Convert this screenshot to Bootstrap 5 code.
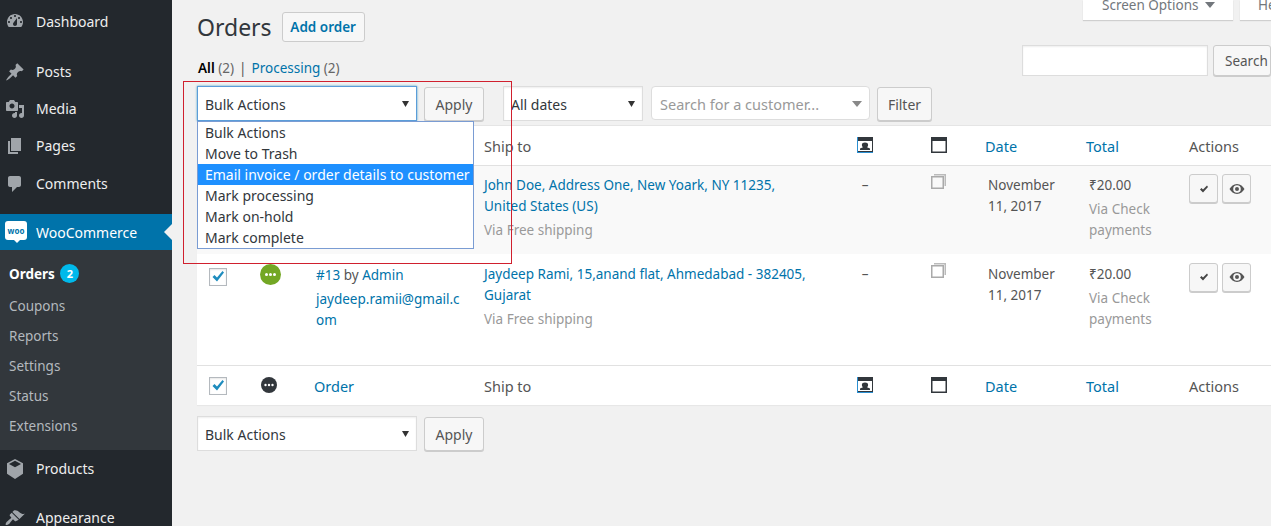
<!DOCTYPE html>
<html lang="en">
<head>
<meta charset="UTF-8">
<title>Orders</title>
<link href="https://cdn.jsdelivr.net/npm/bootstrap@5.3.3/dist/css/bootstrap.min.css" rel="stylesheet">
<style>
html, body { height: 526px; overflow: hidden; }
body { background: #f1f1f1; color: #32373c; font-family: "Noto Sans", "Open Sans", sans-serif; font-size: 14px; line-height: 21px; }
a { color: #0073aa; text-decoration: none; }

/* sidebar */
.side-menu { width: 172px; height: 526px; flex: none; background: #23282d; overflow: hidden; }
.side-link { display: flex; align-items: center; height: 37px; color: #eee; position: relative; }
.side-link svg { width: 20px; height: 20px; margin: 0 11px 0 5px; fill: #a0a5aa; flex: none; }
.side-first { height: 36px; margin-top: 3px; margin-bottom: 14px; }
.side-gap { margin-top: 1px; margin-bottom: 12px; }
.side-active { background: #0073aa; color: #fff; height: 36px; }
.side-active::after { content: ""; position: absolute; right: 0; top: 10px; border: 8px solid transparent; border-right-color: #f1f1f1; border-left-width: 0; }
.woo-logo { width: 22px; height: 19px; margin: 0 9px 3px 5px; background: #fff; border-radius: 3px; color: #0073aa; font-size: 8px; font-weight: 700; line-height: 19px; text-align: center; position: relative; flex: none; }
.woo-logo::after { content: ""; position: absolute; left: 9px; top: 19px; border: 3px solid transparent; border-top-color: #fff; }
.side-sub { background: #32373c; height: 200px; padding-top: 8px; }
.side-sub a { display: block; height: 30px; line-height: 30px; padding-left: 9px; color: #b4b9be; font-size: 13.5px; }
.side-sub a.side-current { color: #fff; font-weight: 700; margin-top: 1px; margin-bottom: 2px; }
.order-count { display: inline-block; width: 19px; height: 19px; margin-left: 2px; border-radius: 50%; background: #00b9eb; color: #fff; font-size: 11px; line-height: 19px; text-align: center; vertical-align: 1px; }
.side-after { margin-bottom: 12px; }

/* page */
.page-wrap { flex: 1; min-width: 0; padding-left: 25px; position: relative; overflow: hidden; }
.head-row { height: 42px; }
.page-title { font-size: 23px; line-height: 30px; font-weight: 400; margin: 0; }
.title-wrap { padding-top: 12px; }
.wp-btn { display: inline-block; height: 34px; padding: 0 8px; line-height: 33px; background: #f7f7f7; border: 1px solid #ccc; border-radius: 3px; box-shadow: 0 1px 0 #ccc; color: #555; font-size: 14px; white-space: nowrap; }
.add-btn { height: 30px; line-height: 29px; width: 83px; margin-left: 10px; padding: 0; text-align: center; box-shadow: none; color: #0073aa; font-weight: 600; font-size: 13.5px; }
.top-tab { height: 20px; line-height: 10px; background: #fff; box-shadow: 0 1px 1px rgba(0,0,0,.14); color: #72777c; font-size: 13.5px; }
.tab-screen { width: 150px; margin-right: 7px; padding-left: 19px; }
.tab-help { width: 31px; padding-left: 18px; overflow: hidden; }
.tab-arrow { display: inline-block; margin-left: 7px; border: 5px solid transparent; border-top: 6px solid #72777c; border-bottom: 0; vertical-align: 2px; }
.search-row { height: 31px; margin-top: 3px; }
.filter-links { margin-left: 1px; line-height: 16px; color: #666; font-size: 13.5px; }
.filter-links b { color: #000; font-weight: 600; }
.filter-links .sep { margin: 0 5px; color: #555; }
.search-box { width: 186px; height: 31px; background: #fff; border: 1px solid #ddd; box-shadow: inset 0 1px 2px rgba(0,0,0,.07); }
.search-btn { width: 58px; height: 31px; line-height: 30px; margin-left: 5px; margin-right: 0; padding: 0 0 0 11px; flex: none; overflow: hidden; font-size: 13.5px; }
.nav-row { height: 35px; margin-top: 10px; }
.wp-select.form-select { width: 220px; height: 35px; padding: 2px 7px 0; border: 1px solid #ddd; border-radius: 0; background-color: #fff; background-image: url("data:image/svg+xml,%3Csvg xmlns='http://www.w3.org/2000/svg' width='7' height='6'%3E%3Cpath d='M0 0h7L3.500 6z' fill='%23333'/%3E%3C/svg%3E"); background-position: right 7px top 14px; background-size: 7px 6px; color: #32373c; font-size: 14px; box-shadow: inset 0 1px 2px rgba(0,0,0,.07); }
.wp-select.sel-focus { border-color: #5b9dd9; box-shadow: 0 0 2px rgba(30,140,190,.8); }
.wp-select.sel-dates { width: 140px; margin-left: 19px; }
.apply-btn { width: 60px; margin-left: 7px; padding: 0; text-align: center; height: 34px; margin-top: 1px; }
.filter-btn { width: 55px; margin-left: 0; }
.customer-box { width: 219px; height: 34px; margin: 0 7px 0 8px; padding: 0 8px; background: #fff; border: 1px solid #ddd; border-radius: 4px; color: #999; line-height: 35px; position: relative; font-size: 14.5px; }
.customer-box::after { content: ""; position: absolute; right: 7px; top: 14px; border: 5px solid transparent; border-top: 6px solid #888; border-bottom: 0; }

/* open bulk list */
.bulk-wrap { position: relative; }
.bulk-list.dropdown-menu { display: block; top: 35px; left: 0; width: 277px; min-width: 0; margin: 0; padding: 0; border: 1px solid #7a9cd3; border-radius: 0; background: #fff; z-index: 5; font-size: 14px; }
.bulk-list .dropdown-item { padding: 0 0 0 7px; height: 21px; line-height: 21px; color: #32373c; white-space: nowrap; overflow: hidden; }
.bulk-list .dropdown-item.active { background: #1e90ff; color: #fff; }
.note-box { position: absolute; left: 11px; top: 81px; width: 329px; height: 183px; border: 1px solid #d0202e; z-index: 6; pointer-events: none; }

/* table */
.orders-table.table { table-layout: fixed; width: 1074px; margin: 4px 0 0; background: #fff; border: 1px solid #e5e5e5; border-width: 1px 0 0; box-shadow: 0 1px 1px rgba(0,0,0,.04); color: #555; font-size: 13.5px; }
.orders-table.table > :not(caption) > * > * { padding: 9px 10px 0; border: 0; background: transparent; box-shadow: none; color: inherit; vertical-align: top; }
.orders-table thead tr { height: 40px; }
.orders-table tfoot tr { height: 39px; }
.orders-table thead tr { border-bottom: 1px solid #e1e1e1; }
.orders-table tfoot tr { border-top: 1px solid #e1e1e1; }
.orders-table thead th, .orders-table tfoot th { color: #32373c; font-weight: 400; line-height: 22px; font-size: 14.5px; }
.orders-table .row-one { height: 88px; background: #f9f9f9; }
.orders-table .row-two { height: 112px; }
.orders-table.table > tbody > tr > td.cell-in { padding-left: 13px; }
.orders-table.table > tbody > .row-two > td { padding-top: 10px; }
.orders-table.table > tbody > .row-two > td.cell-order { padding: 11px 0 0 12px; }
.orders-table.table > tbody > tr > td.cell-check { padding: 14px 0 0 12px; }
.orders-table.table > tfoot > tr > th.cell-check { padding: 11px 0 0 12px; }
.orders-table.table > tbody > tr > td.cell-status { padding: 10px 0 0 18px; }
.orders-table.table > tfoot > tr > th.cell-status { padding: 11px 0 0 19px; }
.orders-table.table > * > tr > .cell-note { padding-left: 46px; padding-right: 0; }
.orders-table .c-check { width: 45px; }
.orders-table .c-status { width: 62px; }
.orders-table .c-order { width: 170px; }
.orders-table .c-ship { width: 371px; }
.orders-table .c-bill { width: 40px; }
.orders-table .c-note { width: 90px; }
.orders-table .c-date { width: 101px; }
.orders-table .c-total { width: 103px; }
.orders-table .c-act { width: 92px; }
.orders-table th svg, .orders-table td svg { display: block; }
.orders-table .head-icon { margin-top: 2px; }
.center-icon { display: flex; justify-content: center; }
.orders-table .note-icon { margin-top: -1px; }
.mail-line { margin-top: 3px; white-space: nowrap; }
.order-by { color: #555; }
.muted-line { margin-top: 3px; color: #999; font-size: 13.5px; }
.dash-mark { color: #999; text-align: center; }
.wc-check { display: block; width: 18px; height: 18px; background: #fff; border: 1px solid #b4b9be; box-shadow: inset 0 1px 2px rgba(0,0,0,.1); }
.act-btns { display: flex; gap: 4px; margin-top: -1px; }
.act-btn { display: flex; align-items: center; justify-content: center; width: 29px; height: 29px; background: #f7f7f7; border: 1px solid #ccc; border-radius: 3px; box-shadow: 0 1px 0 #ccc; }
.bottom-row { margin-top: 11px; height: 35px; }
</style>
</head>
<body>
<div class="d-flex">

    <!-- SIDEBAR -->
    <nav class="side-menu">
        <a class="side-link side-first" href="#"><svg viewBox="0 0 20 20"><path fill-rule="evenodd" d="M3.76 16h12.48c1.1-1.37 1.76-3.11 1.76-5 0-4.42-3.58-8-8-8s-8 3.58-8 8c0 1.89.66 3.63 1.76 5zM10 4c.55 0 1 .45 1 1s-.45 1-1 1-1-.45-1-1 .45-1 1-1zM6 6c.55 0 1 .45 1 1s-.45 1-1 1-1-.45-1-1 .45-1 1-1zm8 0c.55 0 1 .45 1 1s-.45 1-1 1-1-.45-1-1 .45-1 1-1zm-5.37 5.55L12 7v6c0 1.1-.9 2-2 2s-2-.9-2-2c0-.57.24-1.08.63-1.45zM4 10c.55 0 1 .45 1 1s-.45 1-1 1-1-.45-1-1 .45-1 1-1zm12 0c.55 0 1 .45 1 1s-.45 1-1 1-1-.45-1-1 .45-1 1-1z"/></svg>Dashboard</a>
        <a class="side-link" href="#"><svg viewBox="0 0 20 20"><path d="M10.44 3.02l1.82-1.82 6.36 6.35-1.83 1.82c-1.05-.68-2.48-.57-3.41.36l-.75.75c-.92.93-1.04 2.35-.35 3.41l-1.83 1.82-2.41-2.41-2.8 2.79c-.42.42-3.38 2.71-3.8 2.29s1.86-3.39 2.28-3.81l2.79-2.79L4.1 9.36l1.83-1.82c1.05.69 2.48.57 3.4-.36l.75-.75c.93-.92 1.05-2.35.36-3.41z"/></svg>Posts</a>
        <a class="side-link" href="#"><svg viewBox="0 0 20 20"><path fill-rule="evenodd" d="M13 11V4c0-.55-.45-1-1-1h-1.67L9 1H5L3.67 3H2c-.55 0-1 .45-1 1v7c0 .55.45 1 1 1h10c.55 0 1-.45 1-1zM7 4.5c1.38 0 2.5 1.12 2.5 2.5S8.38 9.5 7 9.5 4.5 8.38 4.5 7 5.62 4.5 7 4.5zM14 6h5v10.5c0 1.38-1.12 2.5-2.5 2.5S14 17.88 14 16.5s1.12-2.5 2.5-2.5c.17 0 .34.02.5.05V9h-3V6zm-4 8.05V13h2v3.5c0 1.38-1.12 2.5-2.5 2.5S7 17.88 7 16.5 8.12 14 9.5 14c.17 0 .34.02.5.05z"/></svg>Media</a>
        <a class="side-link" href="#"><svg viewBox="0 0 20 20"><path d="M6 15V2h10v13H6zm-1 1h8v2H3V5h2v11z"/></svg>Pages</a>
        <a class="side-link side-gap" href="#"><svg viewBox="0 0 20 20"><path d="M5 2h9c1.1 0 2 .9 2 2v7c0 1.1-.9 2-2 2h-2l-5 5v-5H5c-1.1 0-2-.9-2-2V4c0-1.1.9-2 2-2z"/></svg>Comments</a>
        <a class="side-link side-active" href="#"><span class="woo-logo">woo</span>WooCommerce</a>
        <div class="side-sub">
            <a class="side-current" href="#">Orders <span class="order-count">2</span></a>
            <a href="#">Coupons</a>
            <a href="#">Reports</a>
            <a href="#">Settings</a>
            <a href="#">Status</a>
            <a href="#">Extensions</a>
        </div>
        <a class="side-link side-after" href="#"><svg viewBox="0 0 20 20"><path d="M10 0l8 4.2v10.6L10 20l-8-5.2V4.200zM10 1.700L4 4.900l6 3.300 6-3.300z" fill-rule="evenodd"/></svg>Products</a>
        <a class="side-link" href="#"><svg viewBox="0 0 20 20"><path d="M14.480 11.060L7.410 3.990l1.500-1.500c.5-.56 2.300-.47 3.510.32 1.210.8 1.430 1.280 2.910 2.100 1.180.64 2.450 1.260 4.450.85zm-.71.71L6.700 4.700 4.930 6.470c-.39.39-.39 1.020 0 1.410l1.060 1.060c.39.39.39 1.030 0 1.420-.6.6-1.430 1.110-2.210 1.690-.35.26-.7.53-1.010.84C1.430 13.710.05 16.140.72 16.810c.67.67 3.090-.7 4.070-1.680.31-.31.58-.66.84-1.010.58-.78 1.090-1.610 1.690-2.210.39-.39 1.030-.39 1.420 0l1.060 1.060c.39.39 1.020.39 1.410 0z"/></svg>Appearance</a>
    </nav>

    <!-- MAIN -->
    <main class="page-wrap">
        <div class="note-box"></div>

        <div class="head-row d-flex justify-content-between align-items-start">
            <div class="title-wrap d-flex align-items-center">
                <h1 class="page-title">Orders</h1>
                <a class="wp-btn add-btn" href="#">Add order</a>
            </div>
            <div class="d-flex">
                <div class="top-tab tab-screen">Screen Options<span class="tab-arrow"></span></div>
                <div class="top-tab tab-help">He</div>
            </div>
        </div>

        <div class="search-row d-flex justify-content-between align-items-end">
            <div class="filter-links"><b>All</b> (2)<span class="sep">|</span><a href="#">Processing</a> (2)</div>
            <div class="d-flex">
                <div class="search-box"></div>
                <a class="wp-btn search-btn" href="#">Search</a>
            </div>
        </div>

        <div class="nav-row d-flex align-items-start">
            <div class="bulk-wrap">
                <select class="form-select wp-select sel-focus"><option>Bulk Actions</option></select>
                <ul class="dropdown-menu bulk-list list-unstyled">
                    <li class="dropdown-item">Bulk Actions</li>
                    <li class="dropdown-item">Move to Trash</li>
                    <li class="dropdown-item active">Email invoice / order details to customer</li>
                    <li class="dropdown-item">Mark processing</li>
                    <li class="dropdown-item">Mark on-hold</li>
                    <li class="dropdown-item">Mark complete</li>
                </ul>
            </div>
            <a class="wp-btn apply-btn" href="#">Apply</a>
            <select class="form-select wp-select sel-dates"><option>All dates</option></select>
            <div class="customer-box">Search for a customer...</div>
            <a class="wp-btn apply-btn filter-btn" href="#">Filter</a>
        </div>

        <table class="table orders-table">
            <colgroup>
                <col class="c-check"><col class="c-status"><col class="c-order"><col class="c-ship"><col class="c-bill"><col class="c-note"><col class="c-date"><col class="c-total"><col class="c-act">
            </colgroup>
            <thead>
                <tr>
                    <th></th><th></th><th><a href="#">Order</a></th><th>Ship to</th>
                    <th><div class="center-icon"><svg class="head-icon" width="16" height="16" viewBox="0 0 16 16"><path d="M0 0h16v16H0z" fill="#2b8fd1"/><path d="M1 0h15v15H1z" fill="#32373c"/><path d="M1 4h14v10H1z" fill="#fff"/><path d="M3 13v-1.500l3-1.200c-.9-.7-1.100-1.600-1.100-2.500C4.900 6.400 6.200 5.500 8 5.500s3.100.9 3.100 2.300c0 .9-.2 1.800-1.100 2.500l3 1.200V13z" fill="#32373c"/></svg></div></th>
                    <th class="cell-note"><svg class="head-icon" width="16" height="16" viewBox="0 0 16 16"><path d="M0 0h16v16H0z" fill="#32373c"/><path d="M1.500 4h13v10.500h-13z" fill="#fff"/></svg></th>
                    <th><a href="#">Date</a></th><th><a href="#">Total</a></th><th>Actions</th>
                </tr>
            </thead>
            <tbody>
                <tr class="row-one">
                    <td></td><td></td><td></td>
                    <td><a href="#">John Doe, Address One, New Yoark, NY 11235,<br>United States (US)</a><div class="muted-line">Via Free shipping</div></td>
                    <td class="dash-mark">–</td>
                    <td class="cell-note"><svg class="note-icon" width="15" height="15" viewBox="0 0 15 15"><path d="M3 0h12v12h-1.500V1.500H3z" fill="#bbb"/><path d="M0 2h13v13H0z" fill="#aaa"/><path d="M1.500 3.500h10v10h-10z" fill="#f9f9f9"/></svg></td>
                    <td class="cell-in">November<br>11, 2017</td>
                    <td class="cell-in">₹20.00<div class="muted-line">Via Check<br>payments</div></td>
                    <td>
                        <div class="act-btns">
                            <a class="act-btn" href="#"><svg width="10" height="10" viewBox="0 0 10 10"><path d="M1 5.500l1.500-1.500 1.500 1.500L8 1.500l1 1.500-5 5.500z" fill="#444"/></svg></a>
                            <a class="act-btn" href="#"><svg width="16" height="12" viewBox="0 0 16 12"><path fill-rule="evenodd" d="M8 1c3.500 0 6 2.500 7.500 5C14 8.500 11.500 11 8 11S2 8.500.5 6C2 3.500 4.500 1 8 1zm0 1.200a3.800 3.800 0 1 0 0 7.600 3.800 3.800 0 0 0 0-7.600zM8 4a2 2 0 1 1 0 4 2 2 0 0 1 0-4z" fill="#555"/></svg></a>
                        </div>
                    </td>
                </tr>
                <tr class="row-two">
                    <td class="cell-check"><span class="wc-check"><svg width="16" height="16" viewBox="0 0 16 16"><path d="M2.500 8l2-2 2.500 2.500L12.500 2l1.500 1.500L7 12.500z" fill="#1e8cbe"/></svg></span></td>
                    <td class="cell-status"><svg width="21" height="21" viewBox="0 0 21 21"><circle cx="10.500" cy="10.500" r="10.500" fill="#73a724"/><circle cx="6.500" cy="10.500" r="1.500" fill="#fff"/><circle cx="10.500" cy="10.500" r="1.500" fill="#fff"/><circle cx="14.500" cy="10.500" r="1.500" fill="#fff"/></svg></td>
                    <td class="cell-order"><a href="#">#13</a> <span class="order-by">by</span> <a href="#">Admin</a><div class="mail-line"><a href="#">jaydeep.ramii@gmail.c<br>om</a></div></td>
                    <td><a href="#">Jaydeep Rami, 15,anand flat, Ahmedabad - 382405,<br>Gujarat</a><div class="muted-line">Via Free shipping</div></td>
                    <td class="dash-mark">–</td>
                    <td class="cell-note"><svg class="note-icon" width="15" height="15" viewBox="0 0 15 15"><path d="M3 0h12v12h-1.500V1.500H3z" fill="#bbb"/><path d="M0 2h13v13H0z" fill="#aaa"/><path d="M1.500 3.500h10v10h-10z" fill="#fff"/></svg></td>
                    <td class="cell-in">November<br>11, 2017</td>
                    <td class="cell-in">₹20.00<div class="muted-line">Via Check<br>payments</div></td>
                    <td>
                        <div class="act-btns">
                            <a class="act-btn" href="#"><svg width="10" height="10" viewBox="0 0 10 10"><path d="M1 5.500l1.500-1.500 1.500 1.500L8 1.500l1 1.500-5 5.500z" fill="#444"/></svg></a>
                            <a class="act-btn" href="#"><svg width="16" height="12" viewBox="0 0 16 12"><path fill-rule="evenodd" d="M8 1c3.500 0 6 2.500 7.500 5C14 8.500 11.500 11 8 11S2 8.500.5 6C2 3.500 4.500 1 8 1zm0 1.200a3.800 3.800 0 1 0 0 7.600 3.800 3.800 0 0 0 0-7.600zM8 4a2 2 0 1 1 0 4 2 2 0 0 1 0-4z" fill="#555"/></svg></a>
                        </div>
                    </td>
                </tr>
            </tbody>
            <tfoot>
                <tr>
                    <th class="cell-check"><span class="wc-check"><svg width="16" height="16" viewBox="0 0 16 16"><path d="M2.500 8l2-2 2.500 2.500L12.500 2l1.500 1.500L7 12.500z" fill="#1e8cbe"/></svg></span></th>
                    <th class="cell-status"><svg width="16" height="16" viewBox="0 0 16 16"><circle cx="8" cy="8" r="8" fill="#32373c"/><circle cx="4.500" cy="8" r="1.200" fill="#fff"/><circle cx="8" cy="8" r="1.200" fill="#fff"/><circle cx="11.500" cy="8" r="1.200" fill="#fff"/></svg></th>
                    <th><a href="#">Order</a></th><th>Ship to</th>
                    <th><div class="center-icon"><svg class="head-icon" width="16" height="16" viewBox="0 0 16 16"><path d="M0 0h16v16H0z" fill="#2b8fd1"/><path d="M1 0h15v15H1z" fill="#32373c"/><path d="M1 4h14v10H1z" fill="#fff"/><path d="M3 13v-1.500l3-1.200c-.9-.7-1.100-1.600-1.100-2.500C4.900 6.400 6.200 5.500 8 5.500s3.100.9 3.100 2.300c0 .9-.2 1.800-1.100 2.500l3 1.200V13z" fill="#32373c"/></svg></div></th>
                    <th class="cell-note"><svg class="head-icon" width="16" height="16" viewBox="0 0 16 16"><path d="M0 0h16v16H0z" fill="#32373c"/><path d="M1.500 4h13v10.500h-13z" fill="#fff"/></svg></th>
                    <th><a href="#">Date</a></th><th><a href="#">Total</a></th><th>Actions</th>
                </tr>
            </tfoot>
        </table>

        <div class="bottom-row d-flex align-items-start">
            <select class="form-select wp-select"><option>Bulk Actions</option></select>
            <a class="wp-btn apply-btn" href="#">Apply</a>
        </div>
    </main>
</div>
<script src="https://cdn.jsdelivr.net/npm/bootstrap@5.3.3/dist/js/bootstrap.bundle.min.js"></script>
</body>
</html>
